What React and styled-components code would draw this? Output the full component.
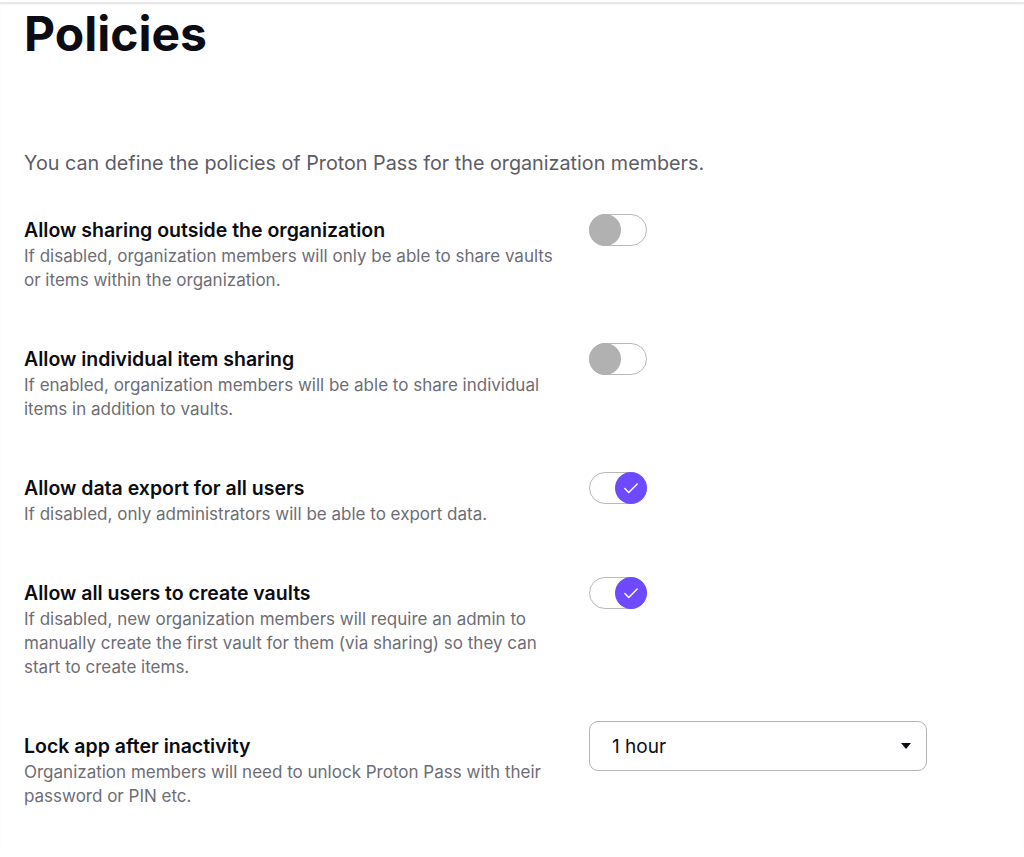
import styled, { createGlobalStyle } from 'styled-components'

const GlobalStyle = createGlobalStyle`
  html, body {
    margin: 0;
    background: #ffffff;
    font-family: Inter, "Noto Sans", sans-serif;
    color: #0c0c14;
  }
`

const Page = styled.div`
  border-top: 2px solid #e6e6e6;
  box-shadow: inset 0 1px 2px rgba(0, 0, 0, 0.04);
  margin-top: 2px;
  padding: 0 24px 40px;
`

const Title = styled.h1`
  margin: 0;
  padding-top: 1px;
  font-size: 48px;
  line-height: 58px;
  font-weight: 700;
`

const Intro = styled.p`
  margin: 86px 0 0;
  font-size: 19.75px;
  line-height: 28px;
  color: #5c5c66;
`

const Settings = styled.div`
  margin-top: 39px;
  display: flex;
  flex-direction: column;
  gap: 53px;
`

const Row = styled.div`
  display: grid;
  grid-template-columns: 540px 1fr;
  column-gap: 25px;
  align-items: start;
`

const Label = styled.div`
  display: flex;
  flex-direction: column;
`

const Name = styled.div`
  font-size: 19.5px;
  line-height: 28px;
  font-weight: 600;
  color: #0c0c14;
`

const Hint = styled.div`
  font-size: 17px;
  line-height: 24px;
  color: #6d6d75;
`

const Track = styled.button`
  position: relative;
  margin-top: -2px;
  width: 58px;
  height: 32px;
  padding: 0;
  border: 1.5px solid #b9b9bd;
  border-radius: 16px;
  background: #ffffff;
  cursor: pointer;
`

const Knob = styled.span`
  position: absolute;
  top: -1.5px;
  left: ${p => (p.$on ? '24.5px' : '-1.5px')};
  width: 32px;
  height: 32px;
  border-radius: 50%;
  background: ${p => (p.$on ? '#6d4aff' : '#b1b1b1')};
  display: flex;
  align-items: center;
  justify-content: center;
`

const Select = styled.div`
  margin-top: -11px;
  width: 338px;
  height: 50px;
  box-sizing: border-box;
  border: 1px solid #b4b4b8;
  border-radius: 9px;
  display: flex;
  align-items: center;
  justify-content: space-between;
  padding: 0 14px 0 22px;
  font-size: 19px;
  color: #0c0c14;
`

const Toggle = ({ on }) => (
  <Track>
    <Knob $on={on}>
      {on && (
        <svg width="18" height="18" viewBox="0 0 16 16" fill="none">
          <path d="M2.5 8.5l3.5 3.5 7.5-7.5" stroke="#fff" strokeWidth="1.3" strokeLinecap="round" strokeLinejoin="round" />
        </svg>
      )}
    </Knob>
  </Track>
)

const settings = [
  {
    name: 'Allow sharing outside the organization',
    hint: 'If disabled, organization members will only be able to share vaults or items within the organization.',
    on: false,
  },
  {
    name: 'Allow individual item sharing',
    hint: 'If enabled, organization members will be able to share individual items in addition to vaults.',
    on: false,
  },
  {
    name: 'Allow data export for all users',
    hint: 'If disabled, only administrators will be able to export data.',
    on: true,
  },
  {
    name: 'Allow all users to create vaults',
    hint: 'If disabled, new organization members will require an admin to manually create the first vault for them (via sharing) so they can start to create items.',
    on: true,
  },
]

export default function App() {
  return (
    <>
      <GlobalStyle />
      <Page>
        <Title>Policies</Title>
        <Intro>You can define the policies of Proton Pass for the organization members.</Intro>
        <Settings>
          {settings.map(s => (
            <Row key={s.name}>
              <Label>
                <Name>{s.name}</Name>
                <Hint>{s.hint}</Hint>
              </Label>
              <div>
                <Toggle on={s.on} />
              </div>
            </Row>
          ))}
          <Row>
            <Label>
              <Name>Lock app after inactivity</Name>
              <Hint>Organization members will need to unlock Proton Pass with their password or PIN etc.</Hint>
            </Label>
            <div>
              <Select>
                <span>1 hour</span>
                <svg width="12" height="8" viewBox="0 0 12 8">
                  <path d="M1 1h10L6 7z" fill="#0c0c14" />
                </svg>
              </Select>
            </div>
          </Row>
        </Settings>
      </Page>
    </>
  )
}
